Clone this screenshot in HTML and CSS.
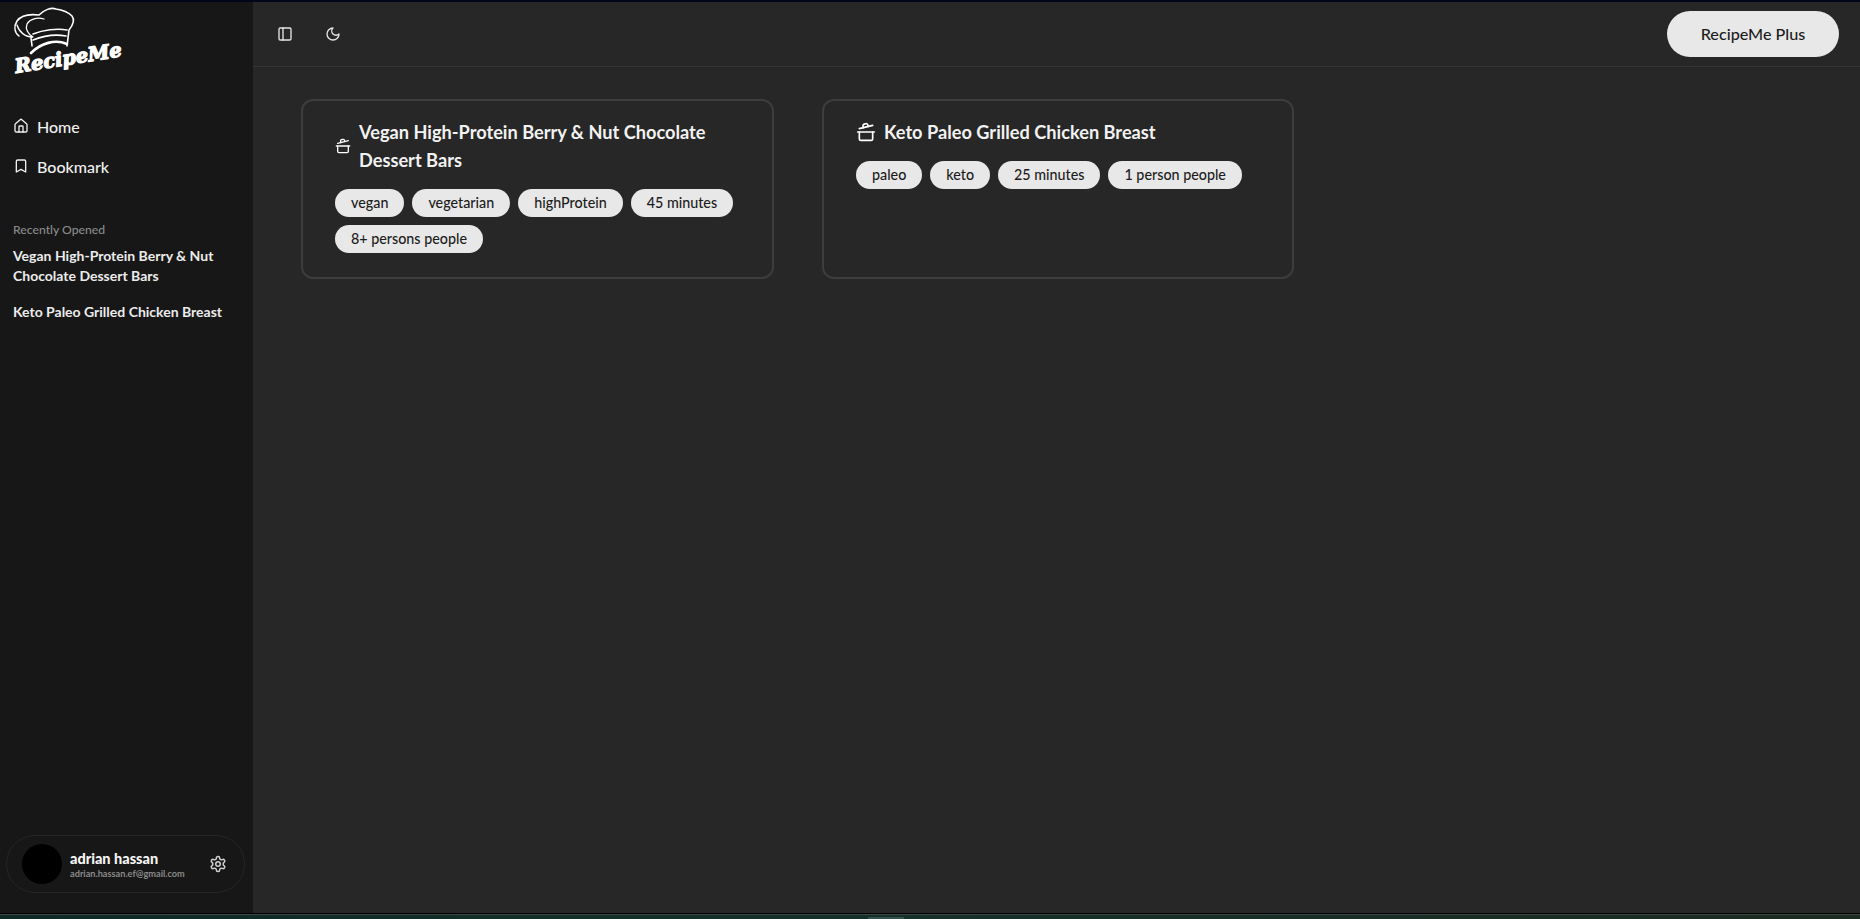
FILE: index.html
```html
<!DOCTYPE html>
<html lang="en">
<head>
<meta charset="utf-8">
<title>RecipeMe</title>
<link rel="stylesheet" href="styles.css">
</head>
<body>
<div class="strip-top"></div>
<div class="app">
  <aside class="sidebar">
    <div class="logo">
      <svg width="118" height="74" viewBox="5 5 118 74" fill="none" stroke="#fff" stroke-linecap="round" stroke-linejoin="round">
        <path stroke-width="1.6" d="M18 37C13 33 13 27 16 22C21 15 30 15 38 16C43 11 50 8 55 10C62 11 67 13 71 17C74 21 72 26 68 31L66 47"/>
        <path stroke-width="1.3" d="M16 26C18 33 24 38 32 38C27 35 24 30 26 25C29 20 36 18 43 20"/>
        <path stroke-width="1.6" d="M30 38C30 42 31 44 31 47M32 35C42 31 56 29 66 31M32 41C42 37 54 35 65 37"/>
        <path stroke-width="2.6" d="M30 54C40 44 54 40 66 45"/>
        <text class="logo-word" x="15" y="74" transform="rotate(-9 15 74)">RecipeMe</text>
      </svg>
    </div>
    <nav class="nav">
      <a class="nav-item">
        <svg class="icon-16" viewBox="0 0 24 24"><path d="M15 21v-8a1 1 0 0 0-1-1h-4a1 1 0 0 0-1 1v8"/><path d="M3 10a2 2 0 0 1 .709-1.528l7-5.999a2 2 0 0 1 2.582 0l7 5.999A2 2 0 0 1 21 10v9a2 2 0 0 1-2 2H5a2 2 0 0 1-2-2z"/></svg>
        <span>Home</span>
      </a>
      <a class="nav-item">
        <svg class="icon-16" viewBox="0 0 24 24"><path d="m19 21-7-4-7 4V5a2 2 0 0 1 2-2h10a2 2 0 0 1 2 2v16z"/></svg>
        <span>Bookmark</span>
      </a>
    </nav>
    <section class="recent">
      <h2 class="recent-title">Recently Opened</h2>
      <a class="recent-item">Vegan High-Protein Berry &amp; Nut Chocolate Dessert Bars</a>
      <a class="recent-item">Keto Paleo Grilled Chicken Breast</a>
    </section>
    <div class="user">
      <div class="avatar"></div>
      <div class="user-text">
        <div class="user-name">adrian hassan</div>
        <div class="user-mail">adrian.hassan.ef@gmail.com</div>
      </div>
      <svg class="icon-gear" viewBox="0 0 24 24"><path d="M12.22 2h-.44a2 2 0 0 0-2 2v.18a2 2 0 0 1-1 1.73l-.43.25a2 2 0 0 1-2 0l-.15-.08a2 2 0 0 0-2.73.73l-.22.38a2 2 0 0 0 .73 2.73l.15.1a2 2 0 0 1 1 1.72v.51a2 2 0 0 1-1 1.74l-.15.09a2 2 0 0 0-.73 2.73l.22.38a2 2 0 0 0 2.73.73l.15-.08a2 2 0 0 1 2 0l.43.25a2 2 0 0 1 1 1.73V20a2 2 0 0 0 2 2h.44a2 2 0 0 0 2-2v-.18a2 2 0 0 1 1-1.73l.43-.25a2 2 0 0 1 2 0l.15.08a2 2 0 0 0 2.73-.73l.22-.39a2 2 0 0 0-.73-2.73l-.15-.08a2 2 0 0 1-1-1.74v-.5a2 2 0 0 1 1-1.74l.15-.09a2 2 0 0 0 .73-2.73l-.22-.38a2 2 0 0 0-2.73-.73l-.15.08a2 2 0 0 1-2 0l-.43-.25a2 2 0 0 1-1-1.73V4a2 2 0 0 0-2-2z"/><circle cx="12" cy="12" r="3"/></svg>
    </div>
  </aside>
  <main class="main">
    <header class="topbar">
      <div class="topbar-icons">
        <svg class="icon-16" viewBox="0 0 24 24"><rect width="18" height="18" x="3" y="3" rx="2"/><path d="M9 3v18"/></svg>
        <svg class="icon-16" viewBox="0 0 24 24"><path d="M12 3a6 6 0 0 0 9 9 9 9 0 1 1-9-9Z"/></svg>
      </div>
      <button class="plus">RecipeMe Plus</button>
    </header>
    <div class="cards">
      <article class="card">
        <div class="card-head">
          <svg class="icon-pot-small" viewBox="0 0 24 24"><path d="M2 12h20"/><path d="M20 12v8a2 2 0 0 1-2 2H6a2 2 0 0 1-2-2v-8"/><path d="m4 8 16-4"/><path d="m8.86 6.78-.45-1.81a2 2 0 0 1 1.45-2.43l1.94-.48a2 2 0 0 1 2.43 1.46l.45 1.8"/></svg>
          <h3 class="card-title">Vegan High-Protein Berry &amp; Nut Chocolate Dessert Bars</h3>
        </div>
        <div class="chips">
          <span class="chip">vegan</span><span class="chip">vegetarian</span><span class="chip">highProtein</span><span class="chip">45 minutes</span><span class="chip">8+ persons people</span>
        </div>
      </article>
      <article class="card">
        <div class="card-head">
          <svg class="icon-pot" viewBox="0 0 24 24"><path d="M2 12h20"/><path d="M20 12v8a2 2 0 0 1-2 2H6a2 2 0 0 1-2-2v-8"/><path d="m4 8 16-4"/><path d="m8.86 6.78-.45-1.81a2 2 0 0 1 1.45-2.43l1.94-.48a2 2 0 0 1 2.43 1.46l.45 1.8"/></svg>
          <h3 class="card-title">Keto Paleo Grilled Chicken Breast</h3>
        </div>
        <div class="chips">
          <span class="chip">paleo</span><span class="chip">keto</span><span class="chip">25 minutes</span><span class="chip">1 person people</span>
        </div>
      </article>
    </div>
  </main>
</div>
<div class="strip-bottom"><div class="strip-handle"></div></div>
</body>
</html>
```
FILE: styles.css
```css
* { box-sizing: border-box; }
html, body { height: 100%; margin: 0; }
body {
  display: flex;
  flex-direction: column;
  overflow: hidden;
  background: #000;
  color: #fff;
  font-family: "Lato", "Noto Sans", sans-serif;
}
.strip-top { height: 2px; background: #020617; flex: none; }
.app { flex: 1; display: flex; min-height: 0; }
.strip-bottom {
  position: relative;
  height: 5px;
  flex: none;
  margin-top: 1px;
  border-top: 1px solid #3b4a48;
  background: linear-gradient(90deg, #0f2a26, #173029 50%, #1d2b20);
}
.strip-handle {
  position: absolute;
  left: 868px;
  top: 2px;
  width: 36px;
  height: 3px;
  background: #35504b;
}
svg { fill: none; stroke: currentColor; stroke-width: 2; stroke-linecap: round; stroke-linejoin: round; flex: none; display: block; }

.sidebar {
  width: 253px;
  flex: none;
  background: #171717;
  display: flex;
  flex-direction: column;
  padding: 0 8px 20px 6px;
}
.logo { height: 89px; padding: 2px 0 0 0; margin-bottom: 23px; }
.logo svg { overflow: visible; }
.logo-word {
  fill: #fff;
  stroke: #fff;
  stroke-width: 1.3;
  font-family: "DejaVu Serif", serif;
  font-style: italic;
  font-weight: 700;
  font-size: 19.5px;
}
.nav { display: flex; flex-direction: column; gap: 16px; padding-left: 7px; }
.nav-item {
  display: flex;
  align-items: center;
  gap: 8px;
  height: 24px;
  font-size: 16px;
  font-weight: 500;
  color: #f0f0f0;
}
.icon-16 { width: 16px; height: 16px; }
.recent { margin-top: 43px; padding-left: 7px; flex: 1; }
.recent-title { margin: 0 0 7px; font-size: 12.2px; line-height: 18px; font-weight: 500; color: #8b8b8b; }
.recent-item { display: block; font-size: 14px; line-height: 20px; font-weight: 700; color: #ececec; margin-bottom: 16px; padding-right: 20px; }
.recent-item:last-child { padding-right: 0; white-space: nowrap; }
.user {
  height: 58px;
  border: 1px solid #262626;
  border-radius: 29px;
  display: flex;
  align-items: center;
  padding: 0 17px 0 15px;
}
.avatar { width: 40px; height: 40px; border-radius: 50%; background: #000; flex: none; }
.user-text { margin-left: 8px; padding-top: 2px; flex: 1; min-width: 0; }
.user-name { font-size: 14.5px; line-height: 18px; font-weight: 900; color: #f5f5f5; }
.user-mail { font-size: 9.2px; line-height: 12px; font-weight: 700; color: #8a8a8a; white-space: nowrap; }
.icon-gear { width: 18px; height: 18px; color: #cfcfcf; }

.main { flex: 1; background: #272727; min-width: 0; }
.topbar {
  height: 65px;
  border-bottom: 1px solid #363636;
  display: flex;
  align-items: center;
  justify-content: space-between;
  padding: 0 21px 0 24px;
}
.topbar-icons { display: flex; gap: 32px; color: #e6e6e6; margin-bottom: 1px; }
.plus {
  width: 172px;
  height: 46px;
  border: 0;
  border-radius: 23px;
  background: #e8e8e8;
  color: #1c1c1c;
  font-family: inherit;
  font-size: 16.2px;
  font-weight: 500;
  margin-bottom: 1px;
}
.cards {
  display: grid;
  grid-template-columns: 473px 472px 472px;
  column-gap: 48px;
  padding: 32px 0 0 48px;
}
.card {
  min-height: 180px;
  border: 2px solid #3d3d3d;
  border-radius: 12px;
  padding: 17px 32px 24px;
}
.card-head { display: flex; align-items: center; gap: 8px; margin-bottom: 15px; }
.card-title { margin: 0; font-size: 18.2px; line-height: 28px; font-weight: 700; color: #f2f2f2; }
.icon-pot-small { width: 16px; height: 16px; }
.icon-pot { width: 20px; height: 20px; }
.chips { display: flex; flex-wrap: wrap; gap: 8px; }
.chip {
  height: 28px;
  padding: 0 16px;
  border-radius: 14px;
  background: #e8e8e8;
  color: #1c1c1c;
  font-size: 14.3px;
  font-weight: 500;
  line-height: 28px;
}
```
